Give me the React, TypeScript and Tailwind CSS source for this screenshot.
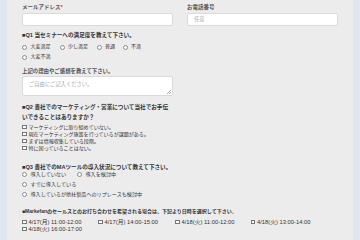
import React from "react";

const F = "font-['Liberation_Sans','Noto_Sans_CJK_JP',sans-serif]";

function Radio({ label, className = "" }: { label: string; className?: string }) {
  return (
    <div className={`flex items-center gap-[3.5px] ${className}`}>
      <span className="w-[5px] h-[5px] rounded-full border-[0.7px] border-[#8a8a8a] bg-white shrink-0" />
      <span>{label}</span>
    </div>
  );
}

function Check({ label, className = "" }: { label: string; className?: string }) {
  return (
    <div className={`flex items-center gap-[2px] ${className}`}>
      <span className="w-[4.5px] h-[4.5px] border-[0.7px] border-[#777] bg-white shrink-0" />
      <span>{label}</span>
    </div>
  );
}

export default function App() {
  return (
    <div className={`w-[360px] h-[240px] bg-[#dfe6f0] overflow-hidden flex ${F}`}>
      <div className="ml-[7px] w-[346px] h-full bg-[#ececec] px-[15px] pt-[3px] text-[#333]">
        <div className="grid grid-cols-2 gap-x-[14px]">
          <div>
            <div className="h-[8px] leading-[8px] text-[5.5px] font-bold text-[#555]">
              メールアドレス<span className="text-[#e03030]">*</span>
            </div>
            <div className="mt-[2px] h-[13px] bg-white border-[0.7px] border-[#dadada] rounded-[2px]" />
          </div>
          <div>
            <div className="h-[8px] leading-[8px] text-[5.5px] font-bold text-[#555]">お電話番号</div>
            <div className="mt-[2px] h-[13px] bg-white border-[0.7px] border-[#dadada] rounded-[2px] flex items-center pl-[6px] text-[5.2px] text-[#aaa]">
              任意
            </div>
          </div>
        </div>

        <div className="w-[151px]">
          <div className="mt-[5px] h-[8px] leading-[8px] text-[5.6px] font-bold text-[#333]">
            ■Q1 当セミナーへの満足度を教えて下さい。
          </div>
          <div className="mt-[4px] h-[8px] flex items-center text-[5px]">
            <Radio label="大変満足" className="w-[37.5px]" />
            <Radio label="少し満足" className="w-[37px]" />
            <Radio label="普通" className="w-[26px]" />
            <Radio label="不満" />
          </div>
          <div className="mt-[2px] h-[8px] flex items-center text-[5px]">
            <Radio label="大変不満" />
          </div>

          <div className="mt-[6px] h-[8px] leading-[8px] text-[5.4px] font-bold text-[#555]">
            上記の理由やご感想を教えて下さい。
          </div>
          <div className="relative mt-[1px] h-[20px] bg-white border-[0.7px] border-[#dadada] rounded-[2px] pl-[6px] pt-[4px] text-[5.3px] leading-[6px] text-[#aaa]">
            ご自由にご記入ください。
            <svg className="absolute right-[1px] bottom-[1px]" width="5" height="5" viewBox="0 0 5 5">
              <line x1="1" y1="5" x2="5" y2="1" stroke="#888" strokeWidth="0.7" />
              <line x1="3" y1="5" x2="5" y2="3" stroke="#888" strokeWidth="0.7" />
            </svg>
          </div>

          <div className="mt-[6px] leading-[10px] text-[5.6px] font-bold text-[#333]">
            ■Q2 貴社でのマーケティング・営業について当社でお手伝いできることはありますか？
          </div>
          <div className="mt-[1.5px] text-[5.05px] leading-[7px]">
            <Check label="マーケティングに取り組めていない。" className="h-[7px]" />
            <Check label="現在マーケティング施策を行っているが課題がある。" className="h-[7px]" />
            <Check label="まずは情報収集している段階。" className="h-[7px]" />
            <Check label="特に困っていることはない。" className="h-[7px]" />
          </div>

          <div className="mt-[12.5px] h-[7px] leading-[7px] text-[5.6px] font-bold text-[#333] whitespace-nowrap">
            ■Q3 貴社でのMAツールの導入状況について教えて下さい。
          </div>
          <div className="text-[5.1px]">
            <div className="h-[8px] flex items-center">
              <Radio label="導入していない" className="w-[55px]" />
              <Radio label="導入を検討中" />
            </div>
            <div className="mt-[2px] h-[8px] flex items-center">
              <Radio label="すでに導入している" />
            </div>
            <div className="mt-[2px] h-[8px] flex items-center">
              <Radio label="導入しているが他社製品へのリプレースも検討中" />
            </div>
          </div>
        </div>

        <div className="mt-[8px] h-[8px] leading-[8px] text-[5px] font-bold text-[#333] whitespace-nowrap">
          ■Markefanのセールスとのお打ち合わせを希望される場合は、下記より日時を選択して下さい。
        </div>
        <div className="mt-[3.5px] text-[5.8px] leading-[7px]">
          <div className="h-[7px] flex items-center">
            <Check label="4/17(月) 11:00-12:00" className="w-[76px]" />
            <Check label="4/17(月) 14:00-15:00" className="w-[77px]" />
            <Check label="4/18(火) 11:00-12:00" className="w-[75.5px]" />
            <Check label="4/18(火) 13:00-14:00" />
          </div>
          <div className="h-[7px] flex items-center">
            <Check label="4/18(火) 16:00-17:00" />
          </div>
        </div>
      </div>
    </div>
  );
}
